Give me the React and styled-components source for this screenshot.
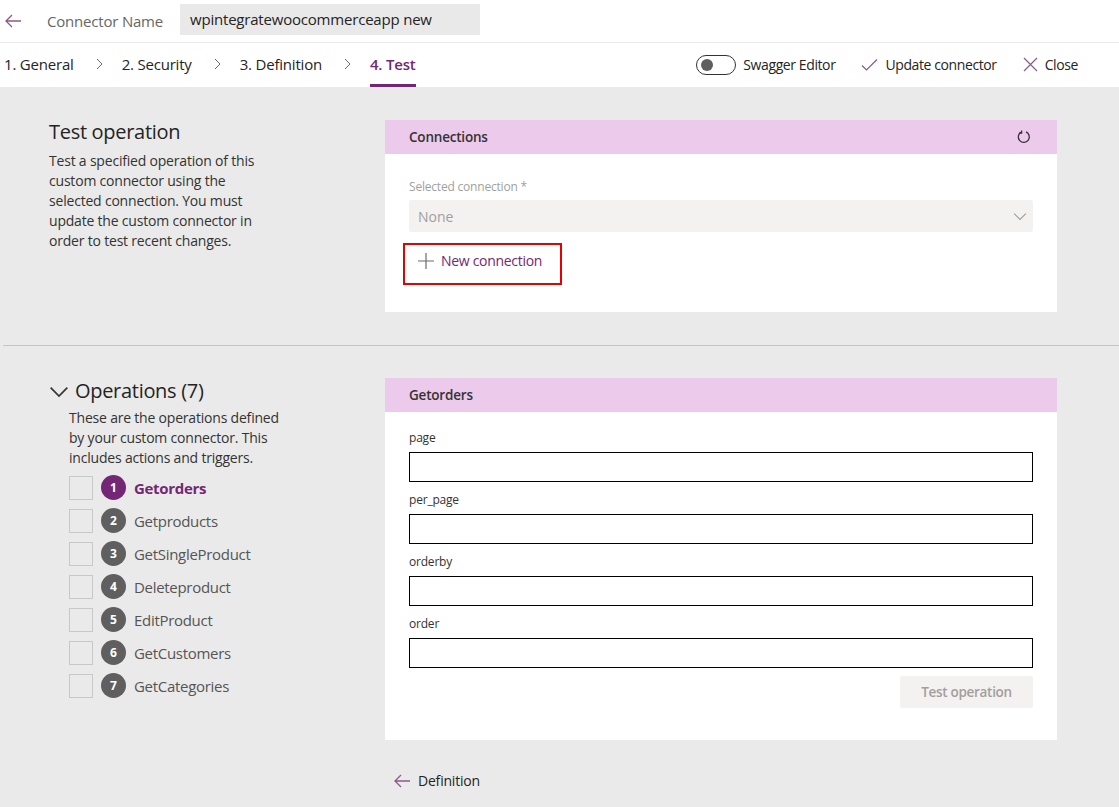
import React from 'react';
import styled, { createGlobalStyle } from 'styled-components';

const GlobalStyle = createGlobalStyle`
  html, body {
    margin: 0;
    padding: 0;
    background: #eaeaea;
    font-family: "Segoe UI", "Open Sans", "Liberation Sans", sans-serif;
    color: #252423;
  }
  * { box-sizing: border-box; }
`;

const purple = '#742774';

const Page = styled.div`
  width: 1119px;
  min-height: 807px;
  background: #eaeaea;
  display: flex;
  flex-direction: column;
`;

const Header = styled.header`
  background: #fff;
`;

const TitleRow = styled.div`
  height: 43px;
  display: flex;
  align-items: center;
  border-bottom: 1px solid #ebebeb;
`;

const IconButton = styled.span`
  display: flex;
  align-items: center;
  justify-content: center;
  width: ${(p) => p.$w || 24}px;
  margin-left: ${(p) => p.$ml || 0}px;
`;

const NameLabel = styled.span`
  font-size: 15px;
  color: #666;
  margin-left: 25px;
  width: 133px;
  letter-spacing: -0.2px;
`;

const NameInput = styled.div`
  width: 300px;
  height: 31px;
  margin-top: -4px;
  background: #e9e9e9;
  font-size: 15px;
  color: #252423;
  padding: 0 10px;
  display: flex;
  align-items: center;
  letter-spacing: -0.2px;
`;

const TabRow = styled.div`
  height: 44px;
  display: flex;
  align-items: stretch;
  justify-content: space-between;
`;

const Tabs = styled.nav`
  display: flex;
  align-items: stretch;
  padding-left: 4px;
`;

const Tab = styled.span`
  display: flex;
  align-items: center;
  font-size: 15px;
  letter-spacing: -0.2px;
  color: ${(p) => (p.$active ? purple : '#252423')};
  font-weight: ${(p) => (p.$active ? 600 : 400)};
  border-bottom: 3px solid ${(p) => (p.$active ? purple : 'transparent')};
`;

const TabSep = styled.span`
  display: flex;
  align-items: center;
  padding: 0 17px 0 19px;
  margin-bottom: 3px;
`;

const Actions = styled.div`
  display: flex;
  align-items: center;
  padding: 0 41px 1px 0;
  gap: 26px;
`;

const Action = styled.span`
  display: flex;
  align-items: center;
  gap: 7px;
  font-size: 14px;
  letter-spacing: -0.4px;
  color: #252423;
`;

const Toggle = styled.span`
  width: 40px;
  height: 20px;
  border: 1px solid #333;
  border-radius: 10px;
  display: flex;
  align-items: center;
  padding-left: 4px;
  &::after {
    content: '';
    width: 12px;
    height: 12px;
    border-radius: 50%;
    background: #605e5c;
  }
`;

const Section = styled.section`
  display: grid;
  grid-template-columns: 336px 672px;
  padding: ${(p) => p.$pad};
  padding-left: 49px;
`;

const Divider = styled.hr`
  margin: 0 0 0 3px;
  border: none;
  border-top: 1px solid #c4c4c4;
`;

const SideTitle = styled.h2`
  margin: ${(p) => p.$m || 0};
  font-size: 20px;
  font-weight: 400;
  line-height: 24px;
  color: #252423;
  display: flex;
  align-items: center;
  gap: 6px;
  letter-spacing: -0.3px;
`;

const SideText = styled.p`
  margin: ${(p) => p.$m || '7px 0 0 0'};
  width: ${(p) => p.$w || 230}px;
  font-size: 14px;
  line-height: 20px;
  color: #333;
  letter-spacing: -0.2px;
`;

const Card = styled.div`
  background: #fff;
`;

const CardHead = styled.div`
  height: 34px;
  background: #eccaeb;
  display: flex;
  align-items: center;
  justify-content: space-between;
  padding: 0 26px 0 24px;
  font-size: 13.5px;
  font-weight: 600;
  color: #333;
  letter-spacing: -0.2px;
`;

const CardBody = styled.div`
  padding: ${(p) => p.$pad};
  display: flex;
  flex-direction: column;
`;

const FieldLabel = styled.label`
  font-size: 12px;
  line-height: 16px;
  color: ${(p) => (p.$muted ? '#a19f9d' : '#333')};
  margin-bottom: ${(p) => p.$mb || 6}px;
  letter-spacing: -0.2px;
`;

const Select = styled.div`
  height: 32px;
  background: #f3f2f1;
  border-radius: 2px;
  display: flex;
  align-items: center;
  justify-content: space-between;
  padding: 0 6px 0 9px;
  font-size: 14px;
  color: #a19f9d;
`;

const NewConnection = styled.span`
  align-self: flex-start;
  margin: 11px 0 0 -6px;
  width: 159px;
  height: 42px;
  border: 2px solid #e60000;
  display: flex;
  align-items: center;
  gap: 7px;
  padding: 0 0 7px 13px;
  font-size: 14px;
  color: ${purple};
  letter-spacing: -0.3px;
`;

const TextInput = styled.div`
  height: 30px;
  border: 1px solid #000;
  margin-bottom: 10px;
`;

const Button = styled.span`
  align-self: flex-end;
  margin-top: -2px;
  width: 133px;
  height: 32px;
  background: #f3f2f1;
  border-radius: 2px;
  display: flex;
  align-items: center;
  justify-content: center;
  font-size: 13.5px;
  font-weight: 600;
  color: #a19f9d;
  letter-spacing: -0.3px;
`;

const OpList = styled.ul`
  list-style: none;
  margin: 3px 0 0 20px;
  padding: 0;
`;

const OpRow = styled.li`
  height: 33px;
  display: flex;
  align-items: center;
`;

const Check = styled.span`
  width: 24px;
  height: 24px;
  border: 1px solid #c8c8c8;
  margin-right: 8px;
`;

const Num = styled.span`
  width: 25px;
  height: 25px;
  border-radius: 50%;
  background: ${(p) => (p.$active ? purple : '#5f5f5f')};
  color: #fff;
  font-size: 12px;
  font-weight: 700;
  display: flex;
  align-items: center;
  justify-content: center;
  margin-right: 8px;
`;

const OpName = styled.span`
  font-size: 15px;
  letter-spacing: -0.3px;
  color: ${(p) => (p.$active ? purple : '#555')};
  font-weight: ${(p) => (p.$active ? 700 : 400)};
`;

const BackLink = styled.div`
  grid-column: 2;
  display: flex;
  align-items: center;
  gap: 7px;
  padding: 31px 0 0 8px;
  font-size: 14px;
  color: #252423;
  letter-spacing: -0.2px;
`;

const ArrowLeft = ({ size = 18, color = '#8a5a88' }) => (
  <svg width={size} height={size} viewBox="0 0 18 18" fill="none">
    <path d="M17 9H2M8 3L2 9l6 6" stroke={color} strokeWidth="1.3" />
  </svg>
);

const Chevron = ({ dir = 'right', size = 12, color = '#666' }) => (
  <svg width={size} height={size} viewBox="0 0 12 12" fill="none">
    {dir === 'right' ? (
      <path d="M4 1l5 5-5 5" stroke={color} strokeWidth="1" />
    ) : (
      <path d="M1 4l5 5 5-5" stroke={color} strokeWidth="1" />
    )}
  </svg>
);

const operations = [
  'Getorders',
  'Getproducts',
  'GetSingleProduct',
  'Deleteproduct',
  'EditProduct',
  'GetCustomers',
  'GetCategories',
];

const fields = ['page', 'per_page', 'orderby', 'order'];

export default function App() {
  return (
    <Page>
      <GlobalStyle />
      <Header>
        <TitleRow>
          <IconButton $w={18} $ml={4}>
            <ArrowLeft />
          </IconButton>
          <NameLabel>Connector Name</NameLabel>
          <NameInput>wpintegratewoocommerceapp new</NameInput>
        </TitleRow>
        <TabRow>
          <Tabs>
            <Tab>1. General</Tab>
            <TabSep><Chevron /></TabSep>
            <Tab>2. Security</Tab>
            <TabSep><Chevron /></TabSep>
            <Tab>3. Definition</Tab>
            <TabSep><Chevron /></TabSep>
            <Tab $active>4. Test</Tab>
          </Tabs>
          <Actions>
            <Action>
              <Toggle />
              Swagger Editor
            </Action>
            <Action>
              <svg width="17" height="14" viewBox="0 0 17 14" fill="none">
                <path d="M1 7.5l4.5 4.5L16 1.5" stroke="#8a5a88" strokeWidth="1.2" />
              </svg>
              Update connector
            </Action>
            <Action>
              <svg width="15" height="15" viewBox="0 0 15 15" fill="none">
                <path d="M1 1l13 13M14 1L1 14" stroke="#8a5a88" strokeWidth="1.2" />
              </svg>
              Close
            </Action>
          </Actions>
        </TabRow>
      </Header>

      <Section $pad="33px 0 33px">
        <div>
          <SideTitle>Test operation</SideTitle>
          <SideText>
            Test a specified operation of this custom connector using the
            selected connection. You must update the custom connector in order
            to test recent changes.
          </SideText>
        </div>
        <Card>
          <CardHead>
            Connections
            <svg width="14" height="14" viewBox="0 0 14 14" fill="none">
              <path
                d="M4 2.2A5.5 5.5 0 1 0 9 1.9"
                stroke="#333"
                strokeWidth="1.3"
              />
              <path d="M4.6 0.6v2.4H2.2" stroke="#333" strokeWidth="1.3" />
            </svg>
          </CardHead>
          <CardBody $pad="25px 24px 27px">
            <FieldLabel $muted $mb={5}>Selected connection *</FieldLabel>
            <Select>
              None
              <Chevron dir="down" size={14} color="#a19f9d" />
            </Select>
            <NewConnection>
              <svg width="16" height="16" viewBox="0 0 16 16" fill="none">
                <path d="M8 0v16M0 8h16" stroke="#6b6b6b" strokeWidth="1.2" />
              </svg>
              New connection
            </NewConnection>
          </CardBody>
        </Card>
      </Section>

      <Divider />

      <Section $pad="32px 0 0">
        <div>
          <SideTitle $m="1px 0 0">
            <Chevron dir="down" size={20} color="#333" />
            Operations (7)
          </SideTitle>
          <SideText $m="5px 0 0 20px" $w={222}>
            These are the operations defined by your custom connector. This
            includes actions and triggers.
          </SideText>
          <OpList>
            {operations.map((op, i) => (
              <OpRow key={op}>
                <Check />
                <Num $active={i === 0}>{i + 1}</Num>
                <OpName $active={i === 0}>{op}</OpName>
              </OpRow>
            ))}
          </OpList>
        </div>
        <Card>
          <CardHead>Getorders</CardHead>
          <CardBody $pad="18px 24px 32px">
            {fields.map((f) => (
              <React.Fragment key={f}>
                <FieldLabel $mb={6}>{f}</FieldLabel>
                <TextInput />
              </React.Fragment>
            ))}
            <Button>Test operation</Button>
          </CardBody>
        </Card>
        <BackLink>
          <ArrowLeft />
          Definition
        </BackLink>
      </Section>
    </Page>
  );
}
